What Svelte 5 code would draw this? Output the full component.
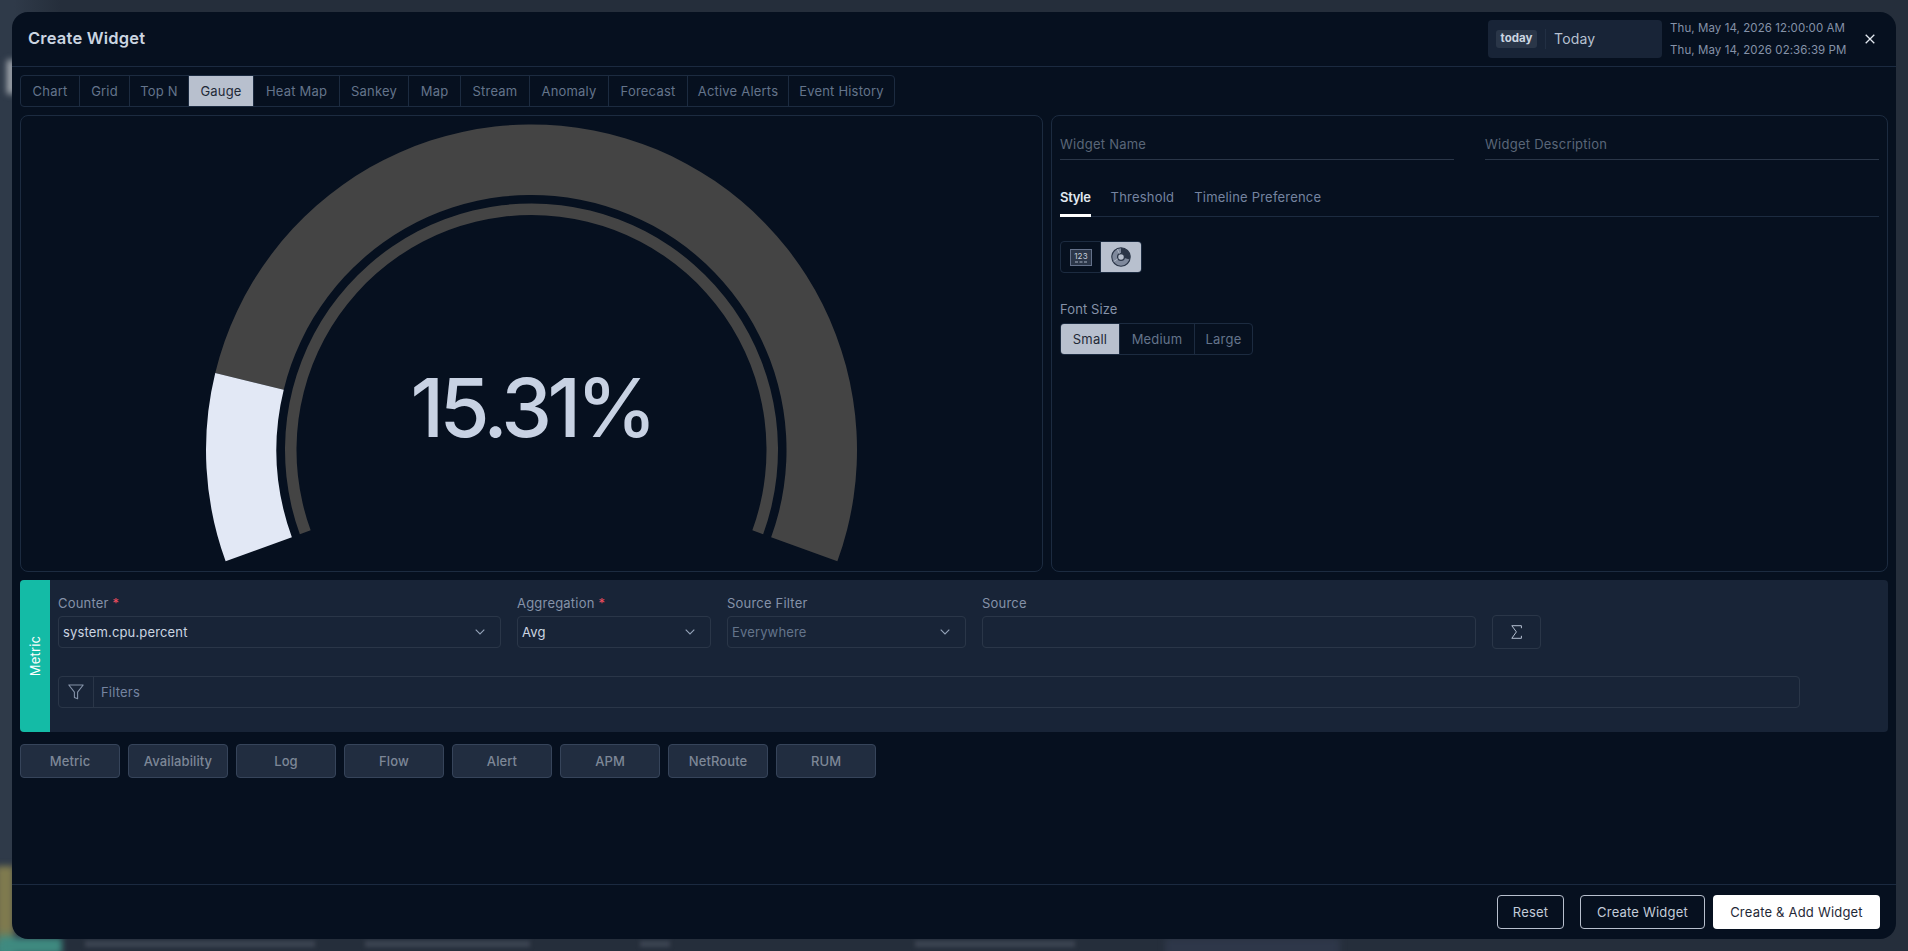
<script>
  const tabs = [
    { label: 'Chart', w: 59 }, { label: 'Grid', w: 50 }, { label: 'Top N', w: 59 },
    { label: 'Gauge', w: 65, active: true }, { label: 'Heat Map', w: 86 }, { label: 'Sankey', w: 69 },
    { label: 'Map', w: 52 }, { label: 'Stream', w: 69 }, { label: 'Anomaly', w: 79 },
    { label: 'Forecast', w: 79 }, { label: 'Active Alerts', w: 101 }, { label: 'Event History', w: 105 }
  ];
  const sizes = [
    { label: 'Small', w: 59, active: true }, { label: 'Medium', w: 75 }, { label: 'Large', w: 57 }
  ];
  const sources = ['Metric', 'Availability', 'Log', 'Flow', 'Alert', 'APM', 'NetRoute', 'RUM'];
  // blurred page text showing under the modal's bottom edge
  const ghosts = [[85, 230], [365, 165], [640, 30], [915, 160]];

  // gauge geometry, sweep is 220deg starting 20deg below the left horizontal
  const cx = 510.5, cy = 334;
  const value = 15.31;
  const start = -20, sweep = 220;

  function pt(r, deg) {
    const a = (deg * Math.PI) / 180;
    return `${(cx - r * Math.cos(a)).toFixed(2)} ${(cy - r * Math.sin(a)).toFixed(2)}`;
  }
  function band(r1, r2, from, to) {
    const large = to - from > 180 ? 1 : 0;
    return `M${pt(r1, from)} A${r1} ${r1} 0 ${large} 1 ${pt(r1, to)} L${pt(r2, to)} A${r2} ${r2} 0 ${large} 0 ${pt(r2, from)} Z`;
  }
  const split = start + (sweep * value) / 100;
</script>

<div class="page">
  <div class="blob blob-a"></div>
  <div class="blob blob-b"></div>
  <div class="blob blob-c"></div>
  <div class="blob blob-d"></div>
  {#each ghosts as g}
    <div class="ghost-text" style:left="{g[0]}px" style:width="{g[1]}px"></div>
  {/each}
  <div class="modal">
    <header class="head">
      <h1>Create Widget</h1>
      <div class="range">
        <div class="range-box">
          <span class="badge">today</span>
          <span class="sep"></span>
          <span class="range-label">Today</span>
        </div>
        <div class="dates">
          <span>Thu, May 14, 2026 12:00:00 AM</span>
          <span>Thu, May 14, 2026 02:36:39 PM</span>
        </div>
        <button class="close" aria-label="Close">
          <svg width="10" height="10" viewBox="0 0 10 10"><path d="M.7.7l8.6 8.6M9.3.7L.7 9.3" stroke="#e2e8f0" stroke-width="1.3" /></svg>
        </button>
      </div>
    </header>

    <div class="body">
      <div class="seg tabs">
        {#each tabs as t}
          <button class:active={t.active} style:width="{t.w}px">{t.label}</button>
        {/each}
      </div>

      <div class="panels">
        <section class="panel">
          <svg class="gauge" width="1021" height="455" viewBox="0 0 1021 455">
            <path d={band(325.5, 255, split, start + sweep)} fill="#444444" />
            <path d={band(325.5, 255, start, split)} fill="#e2e8f5" />
            <path d={band(246.5, 235, start, start + sweep)} fill="#444444" />
            <text x={cx} y="321" text-anchor="middle">15.31%</text>
          </svg>
        </section>

        <section class="panel side">
          <div class="names">
            <div class="line-input">Widget Name</div>
            <div class="line-input">Widget Description</div>
          </div>
          <div class="sub-tabs">
            <span class="on">Style</span>
            <span>Threshold</span>
            <span>Timeline Preference</span>
          </div>
          <div class="seg icons">
            <button aria-label="Number">
              <svg width="22" height="17" viewBox="0 0 22 17">
                <rect x=".5" y=".5" width="21" height="16" fill="#2b3648" stroke="#64718a" />
                <text x="11" y="9.5" text-anchor="middle" class="mini">123</text>
                <path d="M5 13h3M9.5 13h3M14 13h3" stroke="#a8b2c4" stroke-width="1" />
              </svg>
            </button>
            <button class="active" aria-label="Gauge">
              <svg width="20" height="20" viewBox="0 0 20 20">
                <circle cx="10" cy="10" r="9.2" fill="#7f899c" stroke="#2b3648" stroke-width="1.1" />
                <path d="M10 1a9 9 0 0 1 8.7 11.4L13.4 11A3.6 3.6 0 0 0 10 6.4Z" fill="#2b3648" />
                <circle cx="10" cy="10" r="3.4" fill="#b8c0ce" stroke="#2b3648" stroke-width="1.3" />
                <path d="M2.6 14.6L6.9 11.9M6.4 2.2L8.4 6.6" stroke="#b8c0ce" stroke-width=".8" />
              </svg>
            </button>
          </div>
          <div class="font-label">Font Size</div>
          <div class="seg sizes">
            {#each sizes as s}
              <button class:active={s.active} style:width="{s.w}px">{s.label}</button>
            {/each}
          </div>
        </section>
      </div>

      <section class="metric">
        <div class="metric-tag"><span>Metric</span></div>
        <div class="metric-form">
          <div class="row">
            <div class="field counter">
              <label>Counter <i>*</i></label>
              <div class="input light">system.cpu.percent
                <svg class="chev" width="10" height="6" viewBox="0 0 10 6"><path d="M.7.7L5 5 9.3.7" fill="none" stroke="#94a3b8" stroke-width="1.1" /></svg>
              </div>
            </div>
            <div class="field agg">
              <label>Aggregation <i>*</i></label>
              <div class="input light">Avg
                <svg class="chev" width="10" height="6" viewBox="0 0 10 6"><path d="M.7.7L5 5 9.3.7" fill="none" stroke="#94a3b8" stroke-width="1.1" /></svg>
              </div>
            </div>
            <div class="field src-filter">
              <label>Source Filter</label>
              <div class="input">Everywhere
                <svg class="chev" width="10" height="6" viewBox="0 0 10 6"><path d="M.7.7L5 5 9.3.7" fill="none" stroke="#94a3b8" stroke-width="1.1" /></svg>
              </div>
            </div>
            <div class="field src">
              <label>Source</label>
              <div class="input"></div>
            </div>
            <button class="sigma" aria-label="Sum">
              <svg width="11" height="14" viewBox="0 0 11 14"><path d="M10.4 3.2V.7H.8l4.6 6.2L.8 13.3h9.6v-2.5" fill="none" stroke="#b4bfd0" stroke-width="1" /></svg>
            </button>
          </div>
          <div class="filters">
            <span class="filter-icon">
              <svg width="16" height="16" viewBox="0 0 16 16"><path d="M.8 1h14.4L9.6 8.2v6.6l-3.2-1.4V8.2Z" fill="none" stroke="#8492a8" stroke-width="1.1" stroke-linejoin="round" /></svg>
            </span>
            <span class="filter-text">Filters</span>
          </div>
        </div>
      </section>

      <div class="sources">
        {#each sources as s}
          <button>{s}</button>
        {/each}
      </div>
    </div>

    <footer class="foot">
      <button class="ghost reset">Reset</button>
      <button class="ghost create">Create Widget</button>
      <button class="solid">Create &amp; Add Widget</button>
    </footer>
  </div>
</div>

<style>
  :global(body) {
    margin: 0;
    background: #252e3b;
  }
  .page {
    position: relative;
    height: 951px;
    box-sizing: border-box;
    padding: 12px 12px 12px;
    overflow: hidden;
    font-family: Inter, "Liberation Sans", sans-serif;
    background: linear-gradient(90deg, #2f3a49 0, #2f3a49 14px, #252e3b 60px);
  }
  .blob {
    position: absolute;
    filter: blur(3px);
  }
  .blob-a {
    left: 7px;
    top: 60px;
    width: 8px;
    height: 34px;
    background: #a7adb3;
  }
  .blob-b {
    left: -4px;
    top: 866px;
    width: 18px;
    height: 90px;
    background: linear-gradient(#7f7a4e 0, #7f7a4e 70%, #3f8a80 90%);
  }
  .blob-c {
    left: 1165px;
    top: 938px;
    width: 175px;
    height: 20px;
    background: #2e3749;
  }
  .blob-d {
    left: 0;
    top: 938px;
    width: 62px;
    height: 16px;
    background: #3f8a80;
  }
  .ghost-text {
    position: absolute;
    top: 941px;
    height: 6px;
    background: #3d4553;
    filter: blur(2px);
  }
  .modal {
    position: relative;
    height: 927px;
    display: flex;
    flex-direction: column;
    background: #06101f;
    border-radius: 16px;
  }
  button {
    font-family: inherit;
    cursor: pointer;
  }
  .head {
    height: 54px;
    flex: none;
    display: flex;
    align-items: center;
    justify-content: space-between;
    padding: 0 16px;
    border-bottom: 1px solid #1b2a40;
  }
  h1 {
    margin: 0 0 2px;
    font-size: 16.5px;
    font-weight: 600;
    letter-spacing: 0.2px;
    color: #cbd5e1;
  }
  .range {
    display: flex;
    align-items: center;
  }
  .range-box {
    width: 174px;
    height: 38px;
    box-sizing: border-box;
    padding: 0 8px;
    display: flex;
    align-items: center;
    background: #182437;
    border-radius: 4px;
  }
  .badge {
    width: 41px;
    height: 18px;
    line-height: 17px;
    text-align: center;
    font-size: 11.5px;
    font-weight: 700;
    color: #cbd5e1;
    background: #2a3648;
    border-radius: 3px;
  }
  .sep {
    width: 1px;
    height: 20px;
    margin: 0 8px;
    background: #222f43;
  }
  .range-label {
    margin-bottom: 2px;
    font-size: 14px;
    letter-spacing: 0.2px;
    color: #b6c1d1;
  }
  .dates {
    width: 190px;
    margin-left: 8px;
    display: flex;
    flex-direction: column;
    gap: 6px;
    font-size: 11.5px;
    line-height: 16px;
    letter-spacing: 0.08px;
    color: #8592a8;
    white-space: nowrap;
  }
  .close {
    width: 20px;
    height: 20px;
    margin-left: 0;
    padding: 0;
    display: grid;
    place-items: center;
    background: none;
    border: 0;
  }
  .body {
    flex: 1;
    padding: 8px 8px 0;
    display: flex;
    flex-direction: column;
  }
  .seg {
    display: flex;
    width: max-content;
    border: 1px solid #1c2b40;
    border-radius: 4px;
    overflow: hidden;
  }
  .seg button {
    padding: 0;
    background: none;
    border: 0;
    border-right: 1px solid #1c2b40;
    font-size: 13px;
    letter-spacing: 0.2px;
    color: #64748b;
  }
  .seg button:last-child {
    border-right: 0;
  }
  .seg button.active {
    background: #b8c0ce;
    color: #1f2937;
  }
  .tabs {
    height: 30px;
  }
  .tabs button {
    padding-bottom: 1px;
  }
  .panels {
    margin-top: 8px;
    display: grid;
    grid-template-columns: 1023px 837px;
    gap: 8px;
    height: 457px;
  }
  .panel {
    box-sizing: border-box;
    border: 1px solid #1c2b40;
    border-radius: 8px;
    min-width: 0;
  }
  .gauge {
    display: block;
  }
  .gauge text {
    font-family: Inter, sans-serif;
    font-size: 81px;
    font-weight: 500;
    letter-spacing: -4.5px;
    fill: #c8d2e3;
  }
  .side {
    padding: 0 8px;
  }
  .names {
    display: grid;
    grid-template-columns: 394px 394px;
    gap: 31px;
    padding-top: 15px;
  }
  .line-input {
    height: 28px;
    line-height: 26px;
    border-bottom: 1px solid #2a3648;
    font-size: 13px;
    letter-spacing: 0.25px;
    color: #5a6678;
  }
  .sub-tabs {
    margin-top: 20px;
    height: 36px;
    display: flex;
    gap: 20px;
    border-bottom: 1px solid #1c2b40;
    font-size: 13px;
    line-height: 34px;
    letter-spacing: 0.2px;
    color: #7584a0;
  }
  .sub-tabs .on {
    height: 34px;
    border-bottom: 3px solid #fff;
    font-weight: 600;
    letter-spacing: -0.3px;
    color: #e2e8f0;
  }
  .icons {
    margin-top: 24px;
    height: 30px;
  }
  .icons button {
    width: 40px;
    display: grid;
    place-items: center;
  }
  .mini {
    font-size: 8px;
    fill: #c5cedb;
    font-family: Inter, sans-serif;
  }
  .font-label {
    margin-top: 27px;
    font-size: 13px;
    line-height: 18px;
    letter-spacing: 0.1px;
    color: #8592a8;
  }
  .sizes {
    margin-top: 5px;
    height: 30px;
  }
  .metric {
    margin-top: 8px;
    height: 152px;
    display: flex;
    background: #182437;
    border-radius: 4px;
    overflow: hidden;
  }
  .metric-tag {
    width: 30px;
    flex: none;
    display: flex;
    align-items: center;
    justify-content: center;
    background: #14bba6;
  }
  .metric-tag span {
    transform: rotate(-90deg);
    font-size: 13px;
    letter-spacing: 0.2px;
    color: #fff;
  }
  .metric-form {
    flex: 1;
    padding: 14px 0 0 8px;
  }
  .row {
    display: flex;
    align-items: flex-end;
    gap: 16px;
  }
  .field label {
    display: block;
    height: 22px;
    font-size: 13px;
    line-height: 18px;
    letter-spacing: 0.2px;
    color: #8592a8;
  }
  .field i {
    font-style: normal;
    color: #f04d5e;
  }
  .counter { width: 443px; }
  .agg { width: 194px; }
  .src-filter { width: 239px; }
  .src { width: 494px; }
  .input {
    position: relative;
    box-sizing: border-box;
    height: 32px;
    padding: 0 4px;
    line-height: 30px;
    border: 1px solid #2a3648;
    border-radius: 4px;
    font-size: 13px;
    letter-spacing: 0.15px;
    color: #64748b;
  }
  .input.light {
    color: #cbd5e1;
  }
  .chev {
    position: absolute;
    right: 15px;
    top: 12px;
  }
  .sigma {
    width: 49px;
    height: 34px;
    margin-bottom: -1px;
    display: grid;
    place-items: center;
    background: none;
    border: 1px solid #2a3648;
    border-radius: 4px;
    padding: 0;
  }
  .filters {
    margin-top: 28px;
    width: 1742px;
    height: 32px;
    box-sizing: border-box;
    display: flex;
    align-items: center;
    border: 1px solid #2a3648;
    border-radius: 4px;
  }
  .filter-icon {
    width: 34px;
    height: 100%;
    display: grid;
    place-items: center;
    border-right: 1px solid #2a3648;
  }
  .filter-text {
    margin-left: 7px;
    font-size: 13px;
    letter-spacing: 0.2px;
    color: #7584a0;
  }
  .sources {
    margin-top: 12px;
    display: flex;
    gap: 8px;
  }
  .sources button {
    width: 100px;
    height: 34px;
    padding: 0;
    background: #212d40;
    border: 1px solid #36445a;
    border-radius: 4px;
    font-size: 13px;
    font-weight: 500;
    letter-spacing: 0.1px;
    color: #7d8797;
  }
  .foot {
    height: 55px;
    flex: none;
    box-sizing: border-box;
    padding: 10px 16px 0 0;
    display: flex;
    justify-content: flex-end;
    gap: 8px;
    border-top: 1px solid #1b2a40;
  }
  .foot button {
    height: 34px;
    padding: 0;
    border-radius: 4px;
    font-size: 13px;
    letter-spacing: 0.2px;
  }
  .ghost {
    background: none;
    border: 1px solid #b8c0ce;
    color: #c3ccd9;
  }
  .reset {
    width: 67px;
    margin-right: 8px;
  }
  .create {
    width: 125px;
  }
  .solid {
    width: 167px;
    background: #fff;
    border: 0;
    color: #1f2937;
  }
</style>
